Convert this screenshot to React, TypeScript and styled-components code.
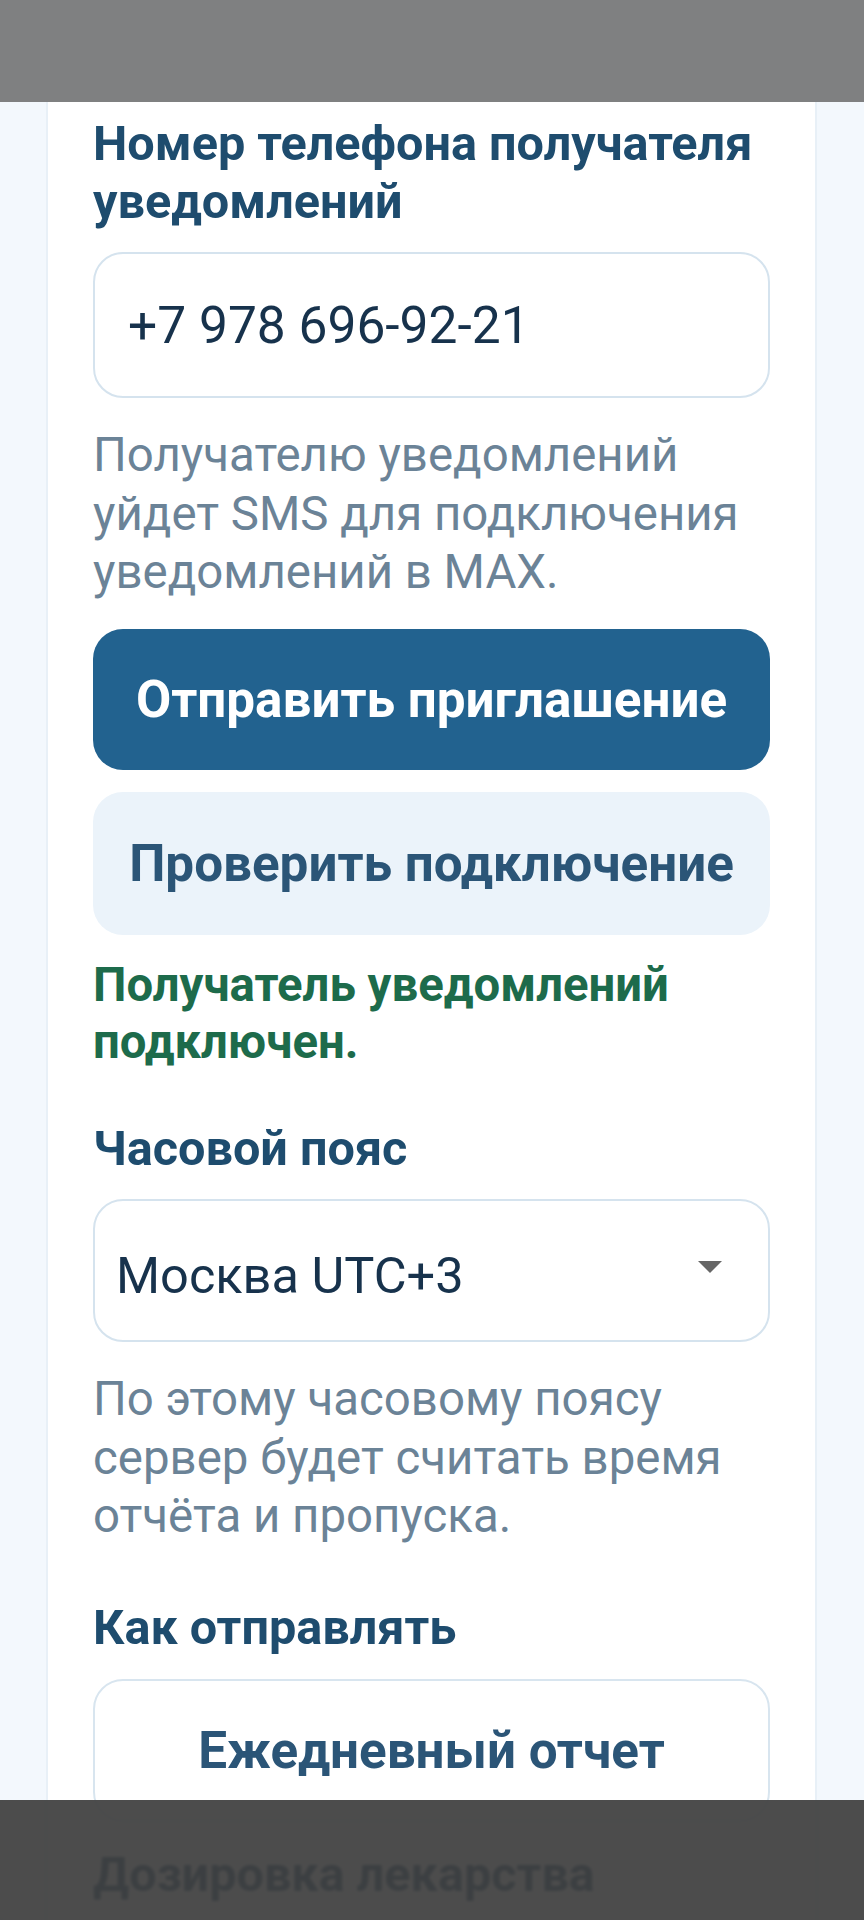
import React from 'react';
import styled, { createGlobalStyle } from 'styled-components';

const GlobalStyle = createGlobalStyle`
  html, body {
    margin: 0;
    padding: 0;
    background: #f3f8fd;
    font-family: Roboto, "Noto Sans", "Liberation Sans", sans-serif;
  }
  * {
    box-sizing: border-box;
  }
`;

const App = () => {
  return (
    <Page>
      <GlobalStyle />
      <StatusBar />
      <Card>
        <Label>Номер телефона получателя уведомлений</Label>
        <TextInput readOnly value="+7 978 696-92-21" />
        <Hint>Получателю уведомлений уйдет SMS для подключения уведомлений в MAX.</Hint>
        <PrimaryButton type="button">Отправить приглашение</PrimaryButton>
        <SecondaryButton type="button">Проверить подключение</SecondaryButton>
        <Success>Получатель уведомлений подключен.</Success>

        <Label>Часовой пояс</Label>
        <SelectBox>
          <span>Москва UTC+3</span>
          <Caret />
        </SelectBox>
        <Hint>По этому часовому поясу сервер будет считать время отчёта и пропуска.</Hint>

        <Label $spaced>Как отправлять</Label>
        <OptionButton type="button">Ежедневный отчет</OptionButton>

        <Label $after>Дозировка лекарства</Label>
        <TextInput readOnly value="" />
      </Card>
      <BottomShade />
    </Page>
  );
};

const Page = styled.div`
  min-height: 2200px;
  background: #f3f8fd;
`;

const StatusBar = styled.div`
  height: 102px;
  background: #7f8081;
`;

const Card = styled.section`
  display: flex;
  flex-direction: column;
  margin: 0 47px 0 46px;
  padding: 13px 45px 200px;
  background: #ffffff;
  border-left: 2px solid #e8f0f7;
  border-right: 2px solid #e8f0f7;
`;

const Label = styled.h2<{ $spaced?: boolean; $after?: boolean }>`
  margin: ${p => (p.$spaced ? '5px' : p.$after ? '24px' : '0')} 0 22px;
  font-size: 48.6px;
  line-height: 57.6px;
  font-weight: 700;
  color: #1e4c6e;
`;

const TextInput = styled.input`
  display: block;
  width: 100%;
  height: 146px;
  padding: 0 33px;
  border: 2px solid #d5e3ee;
  border-radius: 30px;
  background: #ffffff;
  font-family: inherit;
  font-size: 51.5px;
  color: #17324c;
  outline: none;
`;

const Hint = styled.p`
  margin: 28px 0 0;
  font-size: 47.4px;
  line-height: 58.5px;
  color: #6b8397;
  margin-bottom: 48px;
  &:nth-of-type(1) {
    margin-bottom: 27px;
  }
`;

const BaseButton = styled.button`
  display: flex;
  align-items: center;
  justify-content: center;
  width: 100%;
  height: 143px;
  border-radius: 30px;
  font-family: inherit;
  font-size: 51.2px;
  font-weight: 700;
  cursor: pointer;
`;

const PrimaryButton = styled(BaseButton)`
  height: 141px;
  border: none;
  background: #22628f;
  color: #ffffff;
`;

const SecondaryButton = styled(BaseButton)`
  margin-top: 22px;
  border: none;
  background: #ebf3fa;
  color: #2b5577;
`;

const OptionButton = styled(BaseButton)`
  border: 2px solid #d8e5ef;
  background: #ffffff;
  color: #2b5577;
`;

const Success = styled.p`
  margin: 22px 0 48px;
  font-size: 47.3px;
  line-height: 57.6px;
  font-weight: 700;
  color: #1d6b4b;
`;

const SelectBox = styled.div`
  display: flex;
  align-items: center;
  justify-content: space-between;
  height: 143px;
  padding: 10px 46px 0 21px;
  border: 2px solid #d5e3ee;
  border-radius: 30px;
  background: #ffffff;
  font-size: 50.5px;
  color: #17324c;
`;

const Caret = styled.span`
  width: 0;
  height: 0;
  margin-top: -18px;
  border-left: 12px solid transparent;
  border-right: 12px solid transparent;
  border-top: 12px solid #666666;
`;

const BottomShade = styled.div`
  position: fixed;
  left: 0;
  right: 0;
  bottom: 0;
  height: 120px;
  background: rgba(62, 62, 62, 0.93);
  backdrop-filter: blur(1.5px);
`;

export default App;
